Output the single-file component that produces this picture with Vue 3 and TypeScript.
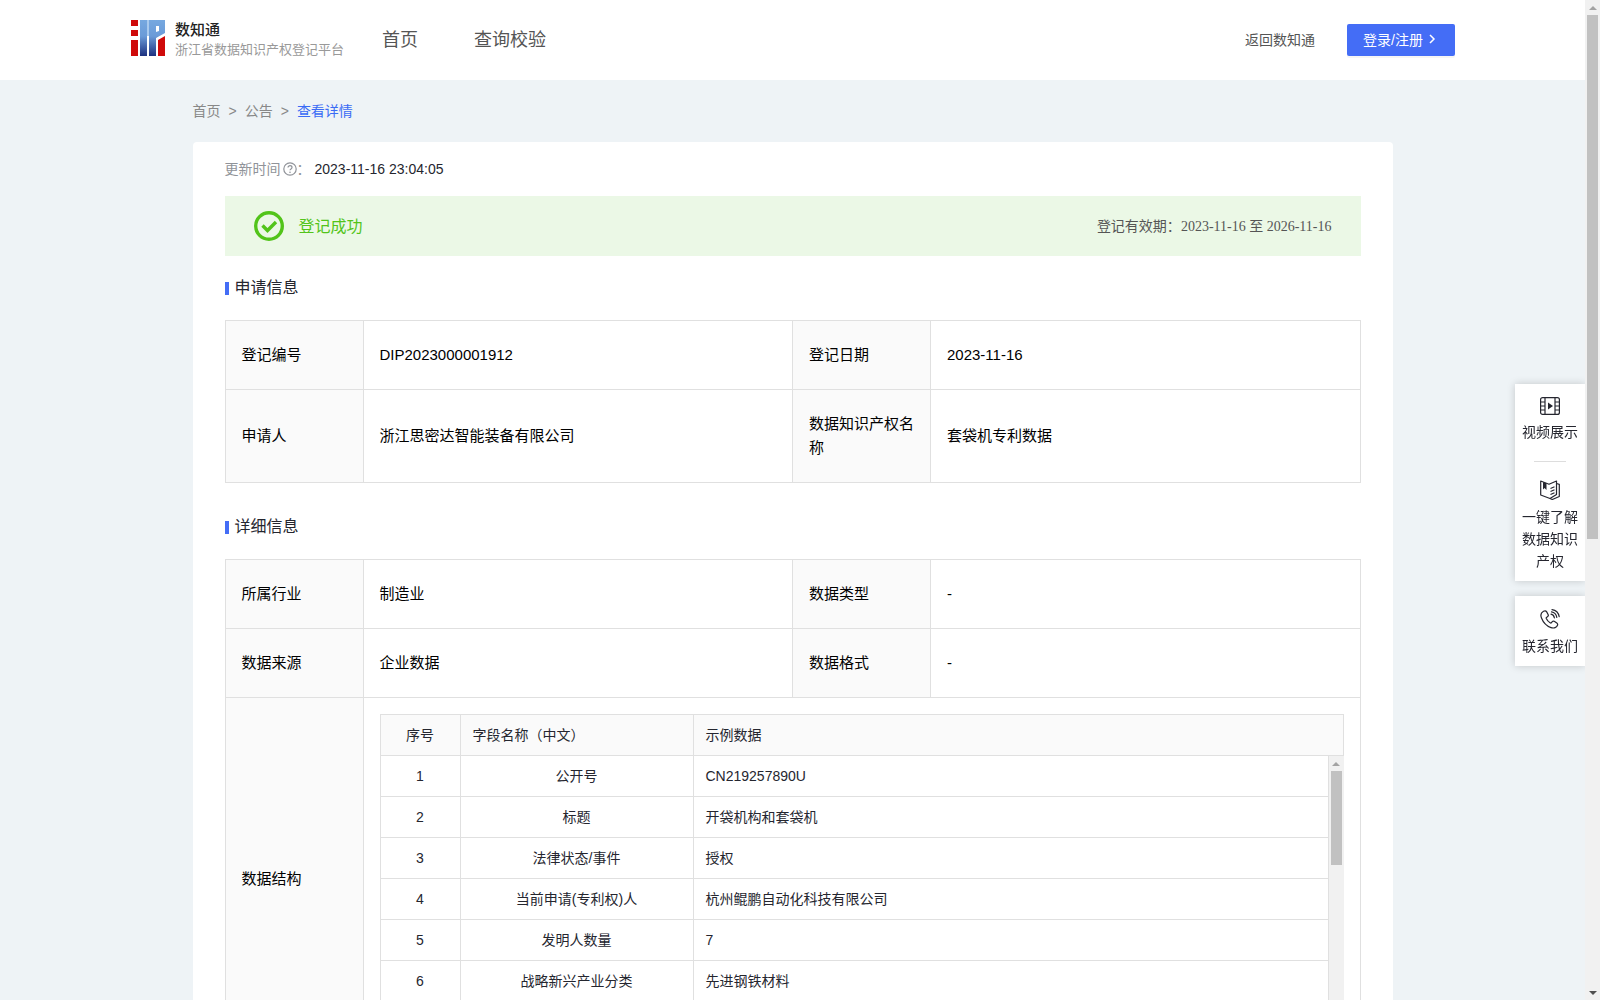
<script setup lang="ts">
interface Pair {
  label: string
  value: string
}

interface Field {
  name: string
  sample: string
}

const applyRows: Pair[][] = [
  [
    { label: '登记编号', value: 'DIP2023000001912' },
    { label: '登记日期', value: '2023-11-16' },
  ],
  [
    { label: '申请人', value: '浙江思密达智能装备有限公司' },
    { label: '数据知识产权名称', value: '套袋机专利数据' },
  ],
]

const detailRows: Pair[][] = [
  [
    { label: '所属行业', value: '制造业' },
    { label: '数据类型', value: '-' },
  ],
  [
    { label: '数据来源', value: '企业数据' },
    { label: '数据格式', value: '-' },
  ],
]

const fields: Field[] = [
  { name: '公开号', sample: 'CN219257890U' },
  { name: '标题', sample: '开袋机构和套袋机' },
  { name: '法律状态/事件', sample: '授权' },
  { name: '当前申请(专利权)人', sample: '杭州鲲鹏自动化科技有限公司' },
  { name: '发明人数量', sample: '7' },
  { name: '战略新兴产业分类', sample: '先进钢铁材料' },
]
</script>

<template>
  <div class="shell">
    <div class="page">
      <header class="header">
        <a class="brand" href="#">
          <svg class="logo" width="34" height="36" viewBox="0 0 34 36" aria-hidden="true">
            <defs>
              <linearGradient id="logo-blue" x1="0" y1="0" x2="0" y2="36" gradientUnits="userSpaceOnUse">
                <stop offset="0" stop-color="#76a8e0" />
                <stop offset="0.45" stop-color="#6b9bd8" />
                <stop offset="1" stop-color="#1d3180" />
              </linearGradient>
            </defs>
            <path fill="#cf0a0a" d="M0 0h7v6H0zM0 10h7v6H0zM0 20h7v16H0zM27 20l7-4v20h-7z" />
            <path fill="url(#logo-blue)" d="M9 0h7v36H9zM18 0h16v13l-9 5v18h-7z" />
            <path fill="#a9caee" d="M16 0h2v16h-2z" />
            <path fill="#fff" d="M25 6h3v5l-3 1z" />
          </svg>
          <span class="brand-text">
            <strong>数知通</strong>
            <span>浙江省数据知识产权登记平台</span>
          </span>
        </a>
        <nav class="nav">
          <a href="#">首页</a>
          <a href="#">查询校验</a>
        </nav>
        <a class="back" href="#">返回数知通</a>
        <button class="login" type="button">
          登录/注册
          <svg width="10" height="10" viewBox="0 0 10 10" aria-hidden="true">
            <path d="M3 1l4 4-4 4" fill="none" stroke="currentColor" stroke-width="1.5" />
          </svg>
        </button>
      </header>

      <main class="main">
        <nav class="crumbs">
          <a href="#">首页</a>
          <span>&gt;</span>
          <a href="#">公告</a>
          <span>&gt;</span>
          <a class="current" href="#">查看详情</a>
        </nav>

        <section class="card">
          <p class="updated">
            <span>更新时间</span>
            <svg width="14" height="14" viewBox="0 0 14 14" aria-hidden="true">
              <circle cx="7" cy="7" r="6.2" fill="none" stroke="currentColor" stroke-width="1.2" />
              <path d="M5 5.6c0-2.6 4-2.4 4-.1 0 1.4-2 1.4-2 2.8" fill="none" stroke="currentColor" stroke-width="1.2" />
              <circle cx="7" cy="10.2" r=".8" fill="currentColor" />
            </svg>
            <span class="colon">：</span>
            <time>2023-11-16 23:04:05</time>
          </p>

          <div class="banner">
            <svg width="30" height="30" viewBox="0 0 30 30" aria-hidden="true">
              <circle cx="15" cy="15" r="13.3" fill="none" stroke="#52c41a" stroke-width="3.4" />
              <path d="M8.5 14.5l5 5 8.500-8.500" fill="none" stroke="#52c41a" stroke-width="3.400" />
            </svg>
            <span class="status">登记成功</span>
            <span class="validity">登记有效期：<time>2023-11-16 </time>至<time> 2026-11-16</time></span>
          </div>

          <h2>申请信息</h2>
          <table class="info">
            <colgroup><col class="label-col" /><col /><col class="label-col" /><col /></colgroup>
            <tbody>
              <tr v-for="(row, i) in applyRows" :key="i">
                <template v-for="cell in row" :key="cell.label">
                  <th scope="row">{{ cell.label }}</th>
                  <td>{{ cell.value }}</td>
                </template>
              </tr>
            </tbody>
          </table>

          <h2>详细信息</h2>
          <table class="info">
            <colgroup><col class="label-col" /><col /><col class="label-col" /><col /></colgroup>
            <tbody>
              <tr v-for="(row, i) in detailRows" :key="i">
                <template v-for="cell in row" :key="cell.label">
                  <th scope="row">{{ cell.label }}</th>
                  <td>{{ cell.value }}</td>
                </template>
              </tr>
              <tr>
                <th scope="row">数据结构</th>
                <td class="nested" colspan="3">
                  <div class="grid">
                    <table class="grid-table">
                      <colgroup><col class="no-col" /><col class="name-col" /><col /></colgroup>
                      <thead>
                        <tr>
                          <th class="center" scope="col">序号</th>
                          <th scope="col">字段名称（中文）</th>
                          <th scope="col">示例数据</th>
                        </tr>
                      </thead>
                    </table>
                    <div class="grid-body">
                      <div class="grid-scroll">
                        <table class="grid-table">
                          <colgroup><col class="no-col" /><col class="name-col" /><col /></colgroup>
                          <tbody>
                            <tr v-for="(field, i) in fields" :key="field.name">
                              <td class="center">{{ i + 1 }}</td>
                              <td class="center">{{ field.name }}</td>
                              <td>{{ field.sample }}</td>
                            </tr>
                          </tbody>
                        </table>
                      </div>
                      <div class="bar" aria-hidden="true">
                        <i class="arrow up"></i>
                        <i class="track"><i class="thumb grid-thumb"></i></i>
                        <i class="arrow down"></i>
                      </div>
                    </div>
                  </div>
                </td>
              </tr>
            </tbody>
          </table>
        </section>
      </main>
    </div>

    <aside class="side">
      <div class="side-box">
        <a href="#">
          <svg width="20" height="18" viewBox="0 0 20 18" fill="none" stroke="currentColor" stroke-width="1.200" aria-hidden="true">
            <rect x=".6" y=".6" width="18.800" height="16.800" rx="2" />
            <path d="M5 .6v16.800M15 .6v16.800M.6 5H5M.6 9H5M.6 13H5M15 5h4.400M15 9h4.400M15 13h4.400" />
            <path d="M8 5.500v7l5-3.500z" fill="currentColor" stroke="none" />
          </svg>
          <span>视频展示</span>
        </a>
        <hr />
        <a href="#">
          <svg width="20" height="20" viewBox="0 0 20 20" fill="none" stroke="currentColor" stroke-width="1.200" stroke-linejoin="round" aria-hidden="true">
            <path d="M.7 1l8.300 3.200L16.500 1v13.500L10 18.500.7 15z" />
            <path d="M16.500 3.500l2.800.8v12.200l-7 3-2.300-1" />
            <path d="M10.500 8.500l4-1.800M10.500 11.500l4-1.800M10.500 14.500l4-1.800" />
            <path d="M3 2v7.500L4.500 8 6.500 10V3.200z" fill="currentColor" stroke="none" />
          </svg>
          <span>一键了解数据知识产权</span>
        </a>
      </div>
      <div class="side-box">
        <a href="#">
          <svg width="20" height="20" viewBox="0 0 20 20" fill="none" stroke="currentColor" stroke-width="1.200" stroke-linecap="round" stroke-linejoin="round" aria-hidden="true">
            <path d="M3.500 2.200C1 3.500.3 6 1.500 9c1.800 4.700 5 8 9.500 9.600 3 1 5.800 0 6.600-2.600.3-1-.1-1.500-.8-2l-2.600-1.700c-.7-.4-1.400-.3-1.900.3l-.8 1c-.4.5-.9.500-1.400.2-1.600-1-3-2.500-3.800-4.300-.2-.5-.1-1 .4-1.300l1-.7c.6-.4.8-1.100.5-1.800L6.700 2.900C6.100 1.800 5 1.500 3.500 2.200z" />
            <path d="M11 5.200c1.800.4 3 1.700 3.400 3.600M11.500 2.900c2.900.5 4.800 2.500 5.300 5.400M12 .7c4 .6 6.500 3.200 7.200 7" />
          </svg>
          <span>联系我们</span>
        </a>
      </div>
    </aside>

    <div class="bar page-bar" aria-hidden="true">
      <i class="arrow up"></i>
      <i class="track"><i class="thumb page-thumb"></i></i>
      <i class="arrow down active"></i>
    </div>
  </div>
</template>

<style>
body {
  margin: 0;
  font-family: "Liberation Sans", "Noto Sans CJK SC", sans-serif;
}
</style>

<style scoped>
.shell {
  display: flex;
  height: 100vh;
  position: relative;
  color: #25262f;
  font-size: 14px;
}
a {
  color: inherit;
  text-decoration: none;
}
table {
  width: 100%;
  table-layout: fixed;
}
.page {
  flex: 1;
  min-width: 0;
  overflow-y: auto;
  scrollbar-width: none;
  background: #eef3f6;
}
.header {
  display: flex;
  align-items: center;
  box-sizing: border-box;
  height: 80px;
  padding: 0 130px 0 131px;
  background: #fff;
  color: #555;
}
.brand {
  display: flex;
  gap: 10px;
}
.logo {
  flex: none;
}
.brand-text {
  display: flex;
  flex-direction: column;
  width: 207px;
  font-size: 13px;
  line-height: 20px;
  color: #999;
}
.brand-text strong {
  font-size: 15px;
  line-height: 20px;
  font-weight: 500;
  color: #222;
}
.nav {
  display: flex;
  flex: 1;
  gap: 56px;
  padding-bottom: 4px;
  font-size: 18px;
}
.back {
  padding-bottom: 2px;
}
.login {
  display: flex;
  align-items: center;
  gap: 4px;
  height: 32px;
  margin-left: 32px;
  padding: 0 18px 2px 16px;
  border: 0;
  border-radius: 2px;
  background: #446df6;
  box-shadow: 0 2px 0 rgba(0, 0, 0, 0.04);
  color: #fff;
  font: inherit;
}
.main {
  max-width: 1200px;
  margin: 0 auto;
}
.crumbs {
  display: flex;
  gap: 8px;
  padding: 20px 0;
  line-height: 22px;
  color: #888;
}
.crumbs .current {
  color: #3a6bf5;
}
.card {
  padding: 16px 32px 32px;
  border-radius: 4px;
  background: #fff;
}
.updated {
  display: flex;
  align-items: center;
  margin: 0 0 16px;
  line-height: 22px;
  color: #909399;
}
.updated svg {
  margin-left: 2px;
}
.updated time {
  color: #25262f;
}
.colon {
  width: 18px;
}
.banner {
  display: flex;
  align-items: center;
  gap: 15px;
  height: 60px;
  padding: 0 29px;
  background: #ebf8e6;
}
.status {
  flex: 1;
  padding-bottom: 3px;
  font-size: 16px;
  color: #52c41a;
}
.validity {
  padding-bottom: 3px;
  color: #555;
}
.validity time {
  font-family: "Liberation Serif", serif;
  white-space: pre;
}
h2 {
  display: flex;
  align-items: center;
  gap: 6px;
  margin: 20px 0;
  font-size: 16px;
  font-weight: 400;
  line-height: 24px;
}
h2::before {
  content: "";
  width: 4px;
  height: 13px;
  background: #446df6;
}
.info {
  border-collapse: collapse;
  font-size: 15px;
  line-height: 24px;
  color: #000;
}
.info + h2 {
  margin-top: 32px;
}
.label-col {
  width: 138px;
}
.info th,
.info td {
  padding: 22px 15px 22px 16px;
  border: 1px solid #e0e0e0;
  font-weight: 400;
  text-align: left;
}
.info th {
  background: #fafafa;
}
.info .nested {
  padding: 16px;
}
.grid {
  border: solid #e0e0e0;
  border-width: 1px 0 0 1px;
  font-size: 14px;
  color: #25262f;
}
.grid-table {
  border-spacing: 0;
}
.no-col {
  width: 80px;
}
.name-col {
  width: 233px;
}
.info .grid th,
.info .grid td {
  height: 40px;
  padding: 0 12px;
  border-width: 0 1px 1px 0;
}
.info .grid .center {
  text-align: center;
}
.grid-body {
  display: flex;
  height: 287px;
}
.grid-scroll {
  flex: 1;
  overflow: hidden;
}
.bar {
  display: flex;
  flex-direction: column;
  flex: none;
  width: 15px;
  background: #f1f1f1;
}
.arrow {
  display: flex;
  align-items: center;
  justify-content: center;
  height: 15px;
  color: #a3a3a3;
}
.arrow::before {
  content: "";
  border: solid transparent;
  border-width: 0 4px 4px;
  border-bottom-color: currentColor;
}
.arrow.down::before {
  border-width: 4px 4px 0;
  border-top-color: currentColor;
}
.arrow.active {
  color: #505050;
}
.track {
  display: block;
  flex: 1;
  padding: 0 2px;
}
.thumb {
  display: block;
  background: #c1c1c1;
}
.grid-thumb {
  height: 94px;
}
.page-thumb {
  height: 54%;
}
.page-bar .track {
  min-height: 0;
}
.side {
  position: absolute;
  right: 15px;
  top: 384px;
  display: flex;
  flex-direction: column;
  gap: 15px;
  width: 70px;
}
.side-box {
  padding: 13px 7px 9px;
  background: #fff;
  box-shadow: 0 0 8px rgba(0, 0, 0, 0.18);
  clip-path: inset(-12px 0 -12px -12px);
}
.side-box a {
  display: flex;
  flex-direction: column;
  align-items: center;
  gap: 6px;
  line-height: 22px;
  text-align: center;
}
.side-box hr {
  width: 32px;
  margin: 18px auto;
  border: 0;
  border-top: 1px solid #ddd;
}
</style>
